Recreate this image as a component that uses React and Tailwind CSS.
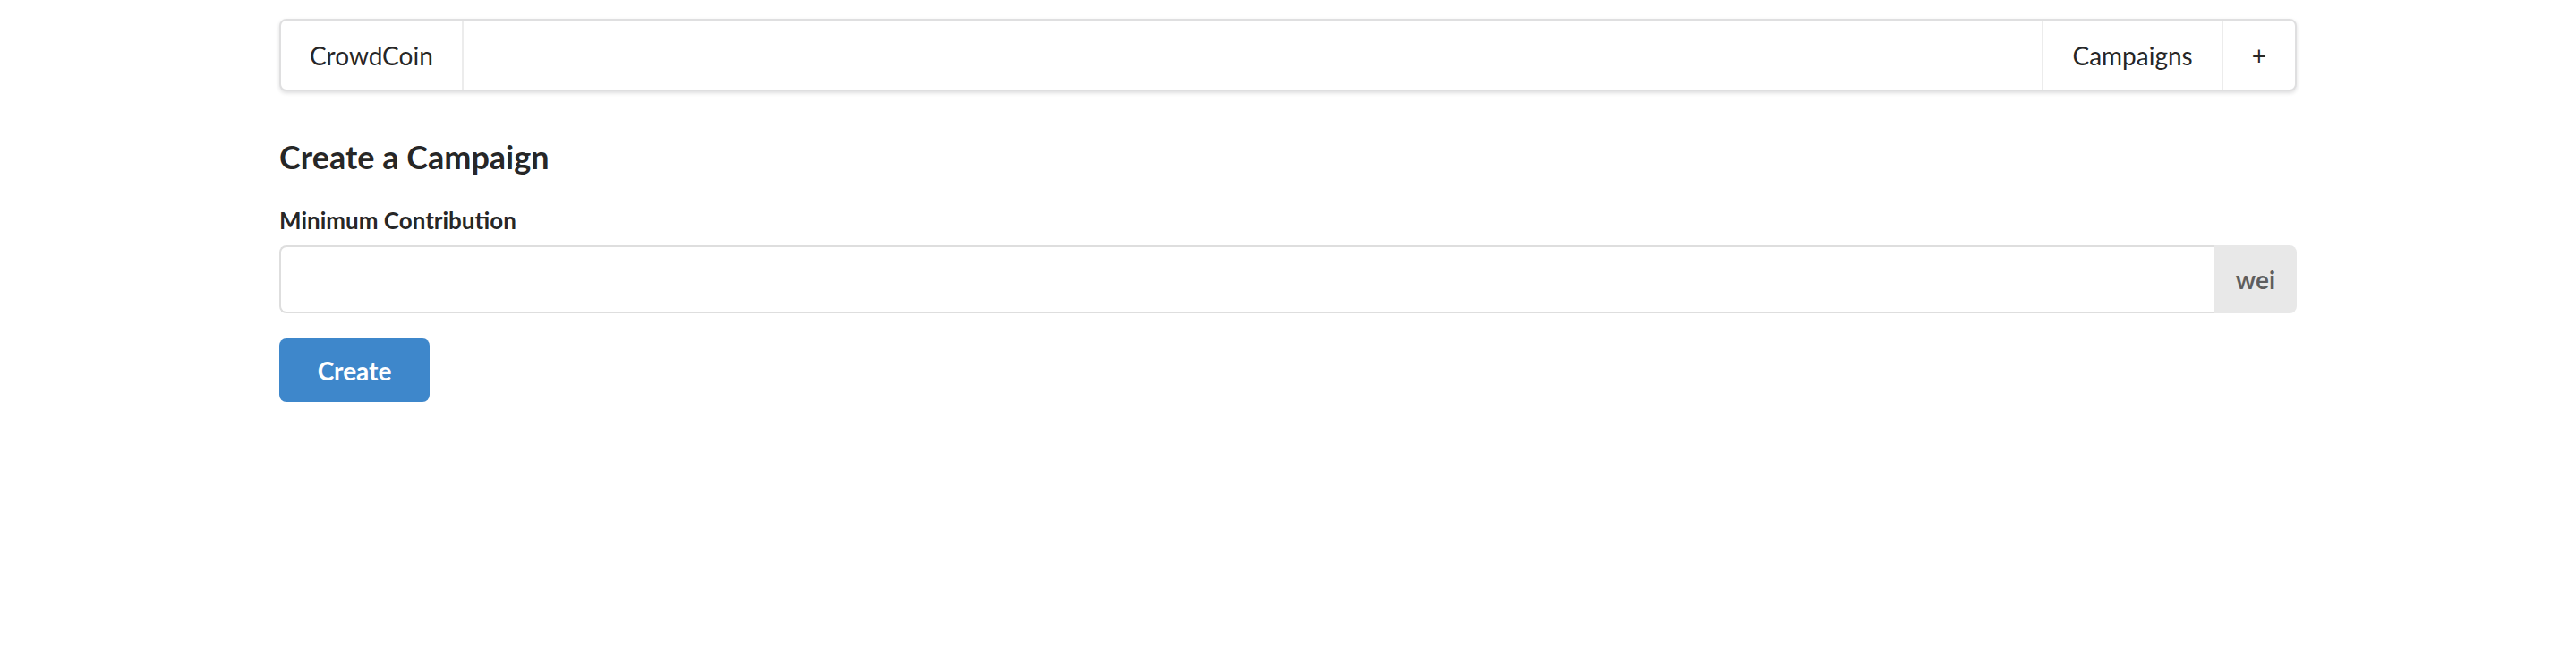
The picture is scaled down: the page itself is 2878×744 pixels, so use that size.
export default function App() {
  const font = { fontFamily: 'Lato, "Helvetica Neue", Arial, sans-serif' };
  return (
    <div className="min-h-[744px] bg-white text-[28px] leading-[40px] text-[rgba(0,0,0,0.87)] font-['Lato','Helvetica_Neue',Arial,sans-serif]" style={font}>
      <div className="mx-auto w-[2254px] pt-[21px]">
        {/* Header menu */}
        <div className="flex h-[81px] rounded-[8px] border-2 border-[#dfdfe0] bg-white shadow-[0_2px_4px_0_rgba(34,36,38,0.15)]">
          <a className="flex items-center px-[32px] leading-none border-r-2 border-[#ececec]">CrowdCoin</a>
          <div className="flex-1" />
          <a className="flex items-center px-[32px] leading-none border-l-2 border-[#ececec]">Campaigns</a>
          <a className="flex items-center px-[32px] leading-none border-l-2 border-[#ececec]">+</a>
        </div>

        <h3 className="mt-[50px] mb-[28px] text-[36px] leading-[46px] font-bold">Create a Campaign</h3>

        <form>
          <label className="block mb-[8px] text-[26px] leading-[40px] font-bold">Minimum Contribution</label>
          <div className="flex h-[76px] mb-[28px]">
            <input className="flex-1 min-w-0 rounded-l-[8px] border-2 border-r-0 border-[#dedede] px-[28px] text-[28px] outline-none" />
            <div className="flex items-center justify-center w-[92px] rounded-r-[8px] bg-[#e8e8e8] font-bold text-[rgba(0,0,0,0.6)] leading-none">wei</div>
          </div>
          <button type="button" className="flex items-center justify-center w-[168px] h-[71px] rounded-[8px] bg-[#3e87cb] text-white font-bold leading-none">
            Create
          </button>
        </form>
      </div>
    </div>
  );
}
